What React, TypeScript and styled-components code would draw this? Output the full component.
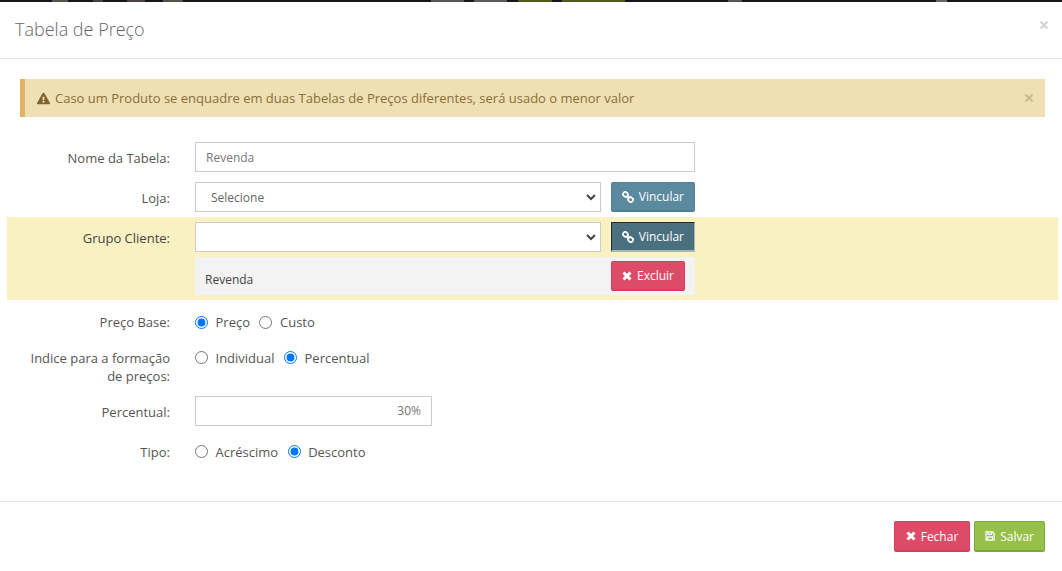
import React from "react";
import styled, { createGlobalStyle } from "styled-components";
import { FaExclamationTriangle } from "react-icons/fa";

const GlobalStyle = createGlobalStyle`
  html, body {
    margin: 0;
    padding: 0;
    background: #fff;
  }
  body {
    font-family: "Open Sans", "Liberation Sans", sans-serif;
    font-size: 13px;
    line-height: 1.42857;
    color: #555;
  }
  * {
    box-sizing: border-box;
  }
`;

const Page = styled.div`
  width: 1062px;
  height: 571px;
  overflow: hidden;
  background: #fff;
`;

const Backdrop = styled.div`
  height: 2px;
  background: linear-gradient(
    90deg,
    #14171a 0 52px,
    #55554f 52px 68px,
    #14171a 68px 93px,
    #45423f 93px 103px,
    #14171a 103px 127px,
    #4a4448 127px 145px,
    #14171a 145px 163px,
    #55524a 163px 183px,
    #14171a 183px 431px,
    #55555a 431px 464px,
    #14171a 464px 474px,
    #5c5c5c 474px 507px,
    #14171a 507px 518px,
    #4f5c20 518px 552px,
    #14171a 552px 562px,
    #4f5c20 562px 625px,
    #14171a 625px 728px,
    #55555a 728px 742px,
    #14171a 742px 936px,
    #66666a 936px 947px,
    #14171a 947px
  );
`;

const Header = styled.header`
  height: 57px;
  display: flex;
  justify-content: space-between;
  border-bottom: 1px solid #e5e5e5;
  padding: 0 13px 0 15px;
`;

const Title = styled.h4`
  margin: 0;
  padding-top: 15px;
  font-size: 18px;
  line-height: 24px;
  font-weight: 300;
  color: #666;
`;

const HeaderClose = styled.span`
  display: flex;
  margin-top: 18px;
  color: #d2d2d2;
`;

const Body = styled.div`
  padding: 20px 17px 0 20px;
  height: 443px;
  border-bottom: 1px solid #e5e5e5;
`;

const Alert = styled.div`
  height: 38px;
  display: flex;
  align-items: center;
  justify-content: space-between;
  background: #efe0b3;
  border-left: 5px solid #e0b265;
  padding: 0 11px 0 12px;
  color: #8a6d3b;
  margin-bottom: 25px;
`;

const AlertText = styled.span`
  display: flex;
  align-items: center;
  gap: 5px;
`;

const AlertClose = styled.span`
  display: flex;
  color: #c9bb91;
`;

const Row = styled.div`
  display: grid;
  grid-template-columns: 150px 1fr;
  column-gap: 25px;
  align-items: start;
  margin-bottom: 10px;
`;

const Highlight = styled.div`
  margin: -5px -13px 6px;
  padding: 5px 13px;
  background: #f9f1c2;
  height: 83px;
`;

const Label = styled.label`
  text-align: right;
  padding-top: 7px;
  color: #555;
`;

const DarkLabel = styled(Label)`
  color: #444;
`;

const Field = styled.div<{ $width?: number; $right?: boolean }>`
  width: ${(p) => p.$width ?? 500}px;
  height: 30px;
  border: 1px solid #ccc;
  background: #fff;
  padding: ${(p) => (p.$right ? "0 10px" : "1px 10px 0")};
  display: flex;
  align-items: center;
  justify-content: ${(p) => (p.$right ? "flex-end" : "flex-start")};
  color: #777;
  font-size: 12px;
`;

const SelectGroup = styled.div`
  width: 500px;
  display: flex;
  gap: 10px;
`;

const SelectBox = styled.div`
  flex: 1;
  height: 30px;
  border: 1px solid #ccc;
  background: #fff;
  display: flex;
  align-items: center;
  justify-content: space-between;
  padding: 1px 4px 0 15px;
  color: #666;
  font-size: 12px;
`;

type Kind = "info" | "infoActive" | "danger" | "success";

const fills: Record<Kind, string> = {
  info: "#5b8a9f",
  infoActive: "#4a7080",
  danger: "#dd4b68",
  success: "#97c04a",
};

const edges: Record<Kind, string> = {
  info: "#4f7f95",
  infoActive: "#a5b8b8",
  danger: "#d43f5f",
  success: "#7fa83a",
};

const Button = styled.button<{ $kind: Kind; $width?: number; $tall?: boolean }>`
  height: ${(p) => (p.$tall ? 31 : 30)}px;
  width: ${(p) => (p.$width ? `${p.$width}px` : "auto")};
  padding: 0 10px;
  display: inline-flex;
  align-items: center;
  justify-content: center;
  gap: 5px;
  font-family: inherit;
  font-size: 12px;
  color: #fff;
  border-radius: ${(p) => (p.$kind === "infoActive" ? 0 : 2)}px;
  border: 1px solid ${(p) => edges[p.$kind]};
  border-bottom-width: 2px;
  background: ${(p) => fills[p.$kind]};
  ${(p) => p.$kind === "infoActive" && "border-top-color:#1f2d33;border-left-color:#1f2d33;"}
`;

const Linked = styled.div`
  width: 500px;
  height: 38px;
  margin-top: 5px;
  background: #f3f3f3;
  display: flex;
  align-items: center;
  justify-content: space-between;
  padding: 0 10px;
  color: #444;
  font-size: 12px;
`;

const LinkedName = styled.span`
  padding-top: 8px;
`;

const Radios = styled.div`
  display: flex;
  align-items: center;
  gap: 9.5px;
  padding-top: 7px;
`;

const RadioLabel = styled.label`
  display: inline-flex;
  align-items: center;
  gap: 7.5px;
  color: #555;
  input {
    margin: 0;
    width: 13px;
    height: 13px;
  }
`;

const Footer = styled.footer`
  display: flex;
  justify-content: flex-end;
  gap: 4px;
  padding: 19px 17px 0;
`;

const LinkIcon = () => (
  <svg width="12" height="12" viewBox="0 0 12 12" fill="none" stroke="currentColor" strokeWidth="1.7">
    <rect x="1" y="1.2" width="5" height="4.4" rx="2" transform="rotate(40 3.5 3.4)" />
    <rect x="6" y="6.4" width="5" height="4.4" rx="2" transform="rotate(40 8.5 8.6)" />
    <path d="M4.5 4.5 L7.5 7.5" />
  </svg>
);

const CrossIcon = ({ size = 10, weight = 3 }: { size?: number; weight?: number }) => (
  <svg width={size} height={size} viewBox="0 0 10 10" fill="none" stroke="currentColor" strokeWidth={weight}>
    <path d="M1.5 1.5 L8.5 8.5 M8.5 1.5 L1.5 8.5" />
  </svg>
);

const SaveIcon = () => (
  <svg width="12" height="12" viewBox="0 0 12 12" fill="none" stroke="currentColor" strokeWidth="1.4">
    <path d="M1.2 1.2 H9 L10.8 3 V10.8 H1.2 Z" />
    <path d="M3.2 10.8 V7 H8.8 V10.8" />
    <path d="M3.6 1.2 V4 H7.8 V1.2" />
  </svg>
);

const Chevron = () => (
  <svg width="10" height="7" viewBox="0 0 10 7" fill="none" stroke="#444" strokeWidth="2">
    <path d="M1 1 L5 5 L9 1" />
  </svg>
);

const Radio = ({ name, label, checked }: { name: string; label: string; checked?: boolean }) => (
  <RadioLabel>
    <input type="radio" name={name} defaultChecked={checked} />
    {label}
  </RadioLabel>
);

export default function App() {
  return (
    <Page>
      <GlobalStyle />
      <Backdrop />
      <Header>
        <Title>Tabela de Preço</Title>
        <HeaderClose>
          <CrossIcon weight={2} />
        </HeaderClose>
      </Header>
      <Body>
        <Alert>
          <AlertText>
            <FaExclamationTriangle size={13} color="#80622f" />
            Caso um Produto se enquadre em duas Tabelas de Preços diferentes, será usado o menor valor
          </AlertText>
          <AlertClose>
            <CrossIcon weight={2} />
          </AlertClose>
        </Alert>

        <Row>
          <Label>Nome da Tabela:</Label>
          <Field>Revenda</Field>
        </Row>
        <Row>
          <Label>Loja:</Label>
          <SelectGroup>
            <SelectBox>
              Selecione
              <Chevron />
            </SelectBox>
            <Button $kind="info">
              <LinkIcon />
              Vincular
            </Button>
          </SelectGroup>
        </Row>
        <Highlight>
          <Row>
            <DarkLabel>Grupo Cliente:</DarkLabel>
            <div>
              <SelectGroup>
                <SelectBox>
                  <span />
                  <Chevron />
                </SelectBox>
                <Button $kind="infoActive">
                  <LinkIcon />
                  Vincular
                </Button>
              </SelectGroup>
              <Linked>
                <LinkedName>Revenda</LinkedName>
                <Button $kind="danger">
                  <CrossIcon />
                  Excluir
                </Button>
              </Linked>
            </div>
          </Row>
        </Highlight>

        <Row>
          <Label>Preço Base:</Label>
          <Radios>
            <Radio name="base" label="Preço" checked />
            <Radio name="base" label="Custo" />
          </Radios>
        </Row>
        <Row>
          <Label>Indice para a formação de preços:</Label>
          <Radios>
            <Radio name="indice" label="Individual" />
            <Radio name="indice" label="Percentual" checked />
          </Radios>
        </Row>
        <Row>
          <Label>Percentual:</Label>
          <Field $width={237} $right>
            30%
          </Field>
        </Row>
        <Row>
          <Label>Tipo:</Label>
          <Radios>
            <Radio name="tipo" label="Acréscimo" />
            <Radio name="tipo" label="Desconto" checked />
          </Radios>
        </Row>
      </Body>
      <Footer>
        <Button $kind="danger" $width={76} $tall>
          <CrossIcon />
          Fechar
        </Button>
        <Button $kind="success" $width={71} $tall>
          <SaveIcon />
          Salvar
        </Button>
      </Footer>
    </Page>
  );
}
